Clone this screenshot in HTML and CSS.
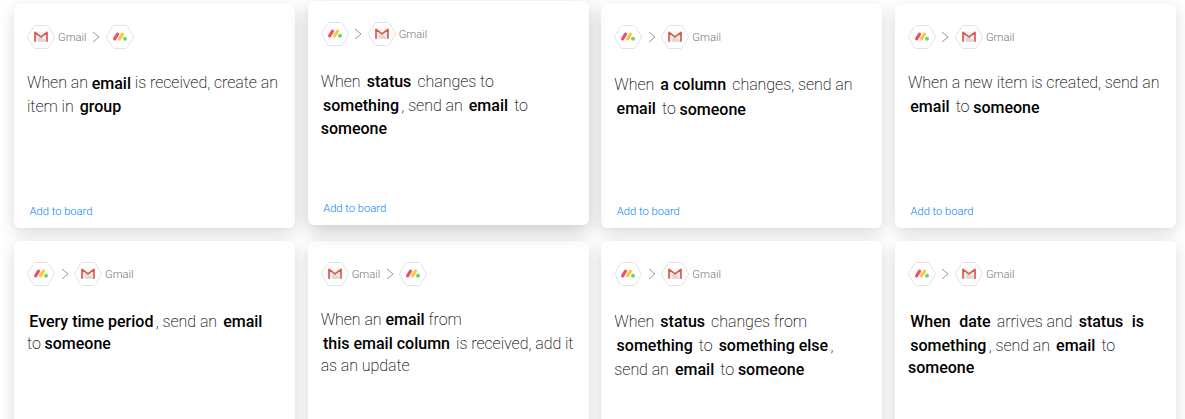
FILE: index.html
```html
<!DOCTYPE html>
<html lang="en">
<head>
    <meta charset="UTF-8">
    <meta name="viewport" content="width=device-width, initial-scale=1.0">
    <title>Gmail integration recipes</title>
    <link rel="stylesheet" href="styles.css">
</head>
<body>

    <!-- shared icons -->
    <svg class="sprite" width="0" height="0">
        <symbol id="gmail" viewBox="0 0 28 24">
            <path class="hex" d="M8.3 .5h11.4q1 0 1.6 .9l5.8 9.5q.6 1.1 0 2.2l-5.8 9.5q-.6 .9-1.6 .9H8.3q-1 0-1.6-.9L.9 13.1q-.6-1.1 0-2.2l5.8-9.5q.6-.9 1.6-.9z"/>
            <path fill="#ececec" d="M8 6.8h12v10H8z"/>
            <path fill="#dadada" d="M11 13l3-1 6 4.8h-8.5z"/>
            <path fill="#f6f6f6" d="M8.5 6.4h11L14 11z"/>
            <path fill="none" stroke="#db5a4f" stroke-width="1.7" stroke-linejoin="round" d="M8 16.8V7.3l6 4.6 6-4.6v9.5"/>
        </symbol>
        <symbol id="monday" viewBox="0 0 28 24">
            <path class="hex" d="M8.3 .5h11.4q1 0 1.6 .9l5.8 9.5q.6 1.1 0 2.2l-5.8 9.5q-.6 .9-1.6 .9H8.3q-1 0-1.6-.9L.9 13.1q-.6-1.1 0-2.2l5.8-9.5q.6-.9 1.6-.9z"/>
            <path stroke="#f2506a" stroke-width="3.2" stroke-linecap="round" d="M8.6 13.8l2.9-4.7"/>
            <path stroke="#fdc83a" stroke-width="3.2" stroke-linecap="round" d="M13.6 13.8l2.9-4.7"/>
            <circle fill="#5bdc70" cx="19" cy="13.8" r="2"/>
        </symbol>
        <symbol id="arrow" viewBox="0 0 8 12">
            <path fill="none" stroke="#999" stroke-width="1" d="M1 1l6 5-6 5"/>
        </symbol>
    </svg>

    <div class="recipes">
        <div class="card">
            <div class="apps">
                <svg class="app"><use href="#gmail"/></svg>
                <span class="name">Gmail</span>
                <svg class="arrow"><use href="#arrow"/></svg>
                <svg class="app"><use href="#monday"/></svg>
            </div>
            <p class="sentence">When an <b>email</b> is received, create an<br>item in <span class="field">group</span></p>
            <a class="add">Add to board</a>
        </div>

        <div class="card active">
            <div class="apps">
                <svg class="app"><use href="#monday"/></svg>
                <svg class="arrow"><use href="#arrow"/></svg>
                <svg class="app"><use href="#gmail"/></svg>
                <span class="name">Gmail</span>
            </div>
            <p class="sentence">When <span class="field">status</span> changes to<br><span class="field">something</span>, send an <span class="field">email</span> to<br><b>someone</b></p>
            <a class="add">Add to board</a>
        </div>

        <div class="card">
            <div class="apps">
                <svg class="app"><use href="#monday"/></svg>
                <svg class="arrow"><use href="#arrow"/></svg>
                <svg class="app"><use href="#gmail"/></svg>
                <span class="name">Gmail</span>
            </div>
            <p class="sentence">When <span class="field">a column</span> changes, send an<br><span class="field">email</span> to <b>someone</b></p>
            <a class="add">Add to board</a>
        </div>

        <div class="card">
            <div class="apps">
                <svg class="app"><use href="#monday"/></svg>
                <svg class="arrow"><use href="#arrow"/></svg>
                <svg class="app"><use href="#gmail"/></svg>
                <span class="name">Gmail</span>
            </div>
            <p class="sentence">When a new item is created, send an<br><span class="field">email</span> to <b>someone</b></p>
            <a class="add">Add to board</a>
        </div>

        <div class="card">
            <div class="apps">
                <svg class="app"><use href="#monday"/></svg>
                <svg class="arrow"><use href="#arrow"/></svg>
                <svg class="app"><use href="#gmail"/></svg>
                <span class="name">Gmail</span>
            </div>
            <p class="sentence"><span class="field">Every time period</span>, send an <span class="field">email</span><br>to <b>someone</b></p>
        </div>

        <div class="card">
            <div class="apps">
                <svg class="app"><use href="#gmail"/></svg>
                <span class="name">Gmail</span>
                <svg class="arrow"><use href="#arrow"/></svg>
                <svg class="app"><use href="#monday"/></svg>
            </div>
            <p class="sentence">When an <b>email</b> from<br><span class="field">this email column</span> is received, add it<br>as an update</p>
        </div>

        <div class="card">
            <div class="apps">
                <svg class="app"><use href="#monday"/></svg>
                <svg class="arrow"><use href="#arrow"/></svg>
                <svg class="app"><use href="#gmail"/></svg>
                <span class="name">Gmail</span>
            </div>
            <p class="sentence">When <span class="field">status</span> changes from<br><span class="field">something</span> to <span class="field">something else</span>,<br>send an <span class="field">email</span> to <b>someone</b></p>
        </div>

        <div class="card">
            <div class="apps">
                <svg class="app"><use href="#monday"/></svg>
                <svg class="arrow"><use href="#arrow"/></svg>
                <svg class="app"><use href="#gmail"/></svg>
                <span class="name">Gmail</span>
            </div>
            <p class="sentence"><span class="field">When</span> <span class="field">date</span> arrives and <span class="field">status</span> <span class="field">is</span><br><span class="field">something</span>, send an <span class="field">email</span> to<br><b>someone</b></p>
        </div>
    </div>

</body>
</html>
```
FILE: styles.css
```css
body {
    margin: 0;
    background-color: #fff;
    font-family: Roboto, sans-serif;
    color: #000;
}
.sprite {
    display: block;
}
.recipes {
    display: grid;
    grid-template-columns: repeat(4, 281px);
    grid-auto-rows: 224px;
    gap: 13px 12.67px;
    box-sizing: border-box;
    height: 419px;
    padding: 4px 0 0 14px;
    overflow: hidden;
}
.card {
    display: flex;
    flex-direction: column;
    box-sizing: border-box;
    padding: 21px 13px 9px;
    background-color: #fff;
    border-radius: 6px;
    box-shadow: 0 5px 16px rgba(0, 0, 0, 0.15);
}
.card.active {
    transform: translateY(-3px);
    box-shadow: 0 6px 20px rgba(0, 0, 0, 0.22);
}
.apps {
    display: flex;
    align-items: center;
    height: 24px;
}
.app {
    width: 28px;
    height: 24px;
}
.hex {
    fill: #fff;
    stroke: #e2e2e2;
}
.arrow {
    width: 8px;
    height: 12px;
    margin: 0 5.5px;
}
.name {
    margin-left: 3px;
    font-size: 11.2px;
    font-weight: 300;
    color: #777;
}
.sentence {
    margin: 23px 0 0;
    font-size: 16px;
    font-weight: 200;
    line-height: 22px;
    letter-spacing: -0.05px;
    white-space: nowrap;
}
.sentence b {
    font-weight: 500;
    line-height: 1;
    letter-spacing: 0;
}
.card:nth-child(-n+4) .sentence b {
    vertical-align: -1px;
}
.field {
    display: inline-block;
    padding: 2px 2.3px 0;
    font-weight: 500;
    letter-spacing: 0;
}
.add {
    margin: auto 0 0 2.5px;
    font-size: 11.2px;
    font-weight: 350;
    line-height: 14px;
    color: #0085ff;
}
```
